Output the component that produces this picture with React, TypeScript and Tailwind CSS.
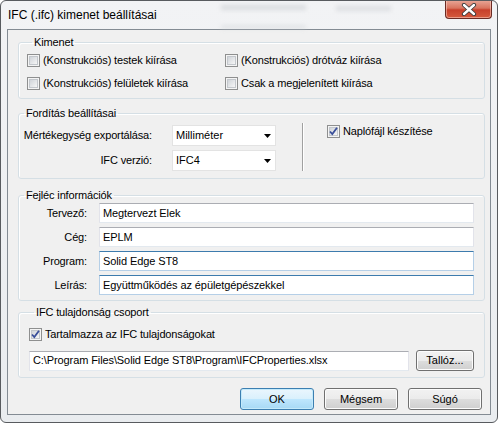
import React from 'react';

const font = "font-['Liberation_Sans',Arial,sans-serif]";

const CheckBox: React.FC<{ checked?: boolean; label: string; tall?: boolean }> = ({ checked, label, tall }) => (
    <div className={`flex items-center ${tall ? 'h-[23px]' : 'h-[22px]'}`}>
        <div className="w-[13px] h-[13px] border border-[#8e8f8f] bg-[#f4f4f4] p-[1px] shrink-0">
            <div className="relative w-full h-full border border-[#c3c7cc] bg-gradient-to-br from-[#d0d4d9] to-[#f6f6f6]">
                {checked && (
                    <svg className="absolute -left-[2px] -top-[2px]" width="11" height="11" viewBox="0 0 11 11">
                        <path d="M2 5.5 L4.3 8 L9 1.8" fill="none" stroke="#3a4f9a" strokeWidth="1.8" />
                    </svg>
                )}
            </div>
        </div>
        <span className="ml-[3px] text-[11px] tracking-[-0.15px] text-black whitespace-nowrap">{label}</span>
    </div>
);

const GroupBox: React.FC<{ title: string; className?: string; children: React.ReactNode }> = ({ title, className, children }) => (
    <fieldset className={`min-w-0 border border-[#d5dfe5] rounded-[3px] shadow-[inset_1px_1px_0_#ffffff] ${className ?? ''}`}>
        <legend className="ml-[5px] px-[2px] text-[11px] leading-[13px] tracking-[-0.15px] text-black">{title}</legend>
        {children}
    </fieldset>
);

const Combo: React.FC<{ value: string }> = ({ value }) => (
    <div className="w-[104px] h-[21px] bg-white border border-[#e3e3e3] flex items-center pl-[3px] pr-[4px]">
        <span className="flex-1 text-[11px]">{value}</span>
        <svg width="7" height="4" viewBox="0 0 7 4">
            <path d="M0 0 H7 L3.5 4 Z" fill="#000" />
        </svg>
    </div>
);

const TextBox: React.FC<{ value: string; hot?: boolean; className?: string }> = ({ value, hot, className }) => (
    <div
        className={`h-[20px] bg-white flex items-center px-[3px] text-[11px] tracking-[-0.1px] whitespace-nowrap overflow-hidden border ${
            hot
                ? 'border-[#b5cfe7] border-t-[#3d7bad]'
                : 'border-[#e2e3ea] border-t-[#abadb3] border-b-[#e3e9ef]'
        } ${className ?? ''}`}
    >
        {value}
    </div>
);

const Button: React.FC<{ label: string; primary?: boolean; small?: boolean }> = ({ label, primary, small }) => (
    <div
        className={`${small ? 'w-[58px] h-[21px]' : 'w-[74px] h-[22px]'} rounded-[3px] border flex items-center justify-center text-[11px] ${
            primary
                ? 'border-[#3c7fb1] bg-[linear-gradient(#eaf6fd_0%,#d9f0fc_50%,#bee6fd_51%,#a7d9f5_100%)] shadow-[inset_0_0_0_1px_#c4eafb]'
                : 'border-[#707070] bg-[linear-gradient(#f2f2f2_0%,#ebebeb_50%,#dddddd_51%,#cfcfcf_100%)] shadow-[inset_0_0_0_1px_#fcfcfc]'
        }`}
    >
        {label}
    </div>
);

export default function App() {
    return (
        <div className={`w-[498px] h-[423px] ${font} text-black`}>
            <div className="w-full h-full border border-[#585b5f] rounded-[6px] bg-[linear-gradient(#f2f3f5,#e9ecef)] flex flex-col overflow-hidden">
                {/* Title bar */}
                <div className="relative h-[28px] flex items-start">
                    {/* blurred glass smudges from windows behind */}
                    <div className="absolute left-[220px] top-[4px] w-[85px] h-[5px] bg-[#c3c7cb] blur-[2px] opacity-50" />
                    <div className="absolute left-[335px] top-[5px] w-[55px] h-[5px] bg-[#c9cdd1] blur-[2px] opacity-50" />
                    <div className="absolute left-[220px] top-[24px] w-[85px] h-[4px] bg-[#c9cdd1] blur-[2px] opacity-40" />
                    <span className="relative ml-[7px] mt-[6px] text-[12px] leading-[16px]">IFC (.ifc) kimenet beállításai</span>
                    <div className="relative ml-auto mr-[5px] w-[47px] h-[19px] -mt-[1px] rounded-b-[4px] border border-[#6a2b24] border-t-0 bg-[linear-gradient(#e9a99a_0%,#d8745f_45%,#c7402b_55%,#d55a3d_100%)] shadow-[inset_0_0_0_1px_rgba(255,220,210,0.5)] flex items-center justify-center">
                        <svg width="16" height="13" viewBox="0 0 16 13">
                            <path d="M3 2 L13 11 M13 2 L3 11" stroke="#3a3a3a" strokeWidth="4.2" strokeLinecap="round" />
                            <path d="M3 2 L13 11 M13 2 L3 11" stroke="#ffffff" strokeWidth="2.4" strokeLinecap="round" />
                        </svg>
                    </div>
                </div>

                {/* Client area */}
                <div className="ml-[6px] w-[484px] h-[386px] border border-[#838b93] bg-[#f0f0f0] flex flex-col pl-[10px] pr-[5px]">
                    <GroupBox title="Kimenet" className="mt-[6px] pl-[8px] pb-[3px]">
                        <div className="flex">
                            <div className="w-[198px]">
                                <CheckBox tall label="(Konstrukciós) testek kiírása" />
                                <CheckBox tall label="(Konstrukciós) felületek kiírása" />
                            </div>
                            <div>
                                <CheckBox tall label="(Konstrukciós) drótváz kiírása" />
                                <CheckBox tall label="Csak a megjelenített kiírása" />
                            </div>
                        </div>
                    </GroupBox>

                    <GroupBox title="Fordítás beállításai" className="mt-[8px] pt-[5px] pb-[7px]">
                        <div className="flex">
                            <div className="flex flex-col gap-[4px]">
                                <div className="flex items-center h-[21px]">
                                    <span className="w-[133px] text-right text-[11px] tracking-[-0.15px] whitespace-nowrap">Mértékegység exportálása:</span>
                                    <div className="ml-[20px]"><Combo value="Milliméter" /></div>
                                </div>
                                <div className="flex items-center h-[21px]">
                                    <span className="w-[133px] text-right text-[11px] tracking-[-0.15px] whitespace-nowrap">IFC verzió:</span>
                                    <div className="ml-[20px]"><Combo value="IFC4" /></div>
                                </div>
                            </div>
                            <div className="ml-[26px] mt-[-2px] w-[2px] h-[48px] border-l border-[#a0a0a0] border-r border-r-white" />
                            <div className="ml-[23px] mt-[-5px]">
                                <CheckBox checked label="Naplófájl készítése" />
                            </div>
                        </div>
                    </GroupBox>

                    <GroupBox title="Fejléc információk" className="mt-[10px] pb-[5px]">
                        <div className="flex flex-col gap-[4px] mt-[1px]">
                            {[
                                ['Tervező:', 'Megtervezt Elek', false],
                                ['Cég:', 'EPLM', false],
                                ['Program:', 'Solid Edge ST8', true],
                                ['Leírás:', 'Együttműködés az épületgépészekkel', true],
                            ].map(([label, value, hot]) => (
                                <div key={label as string} className="flex items-center">
                                    <span className="w-[68px] text-right text-[11px] tracking-[-0.15px]">{label as string}</span>
                                    <TextBox value={value as string} hot={hot as boolean} className="ml-[12px] w-[375px]" />
                                </div>
                            ))}
                        </div>
                    </GroupBox>

                    <GroupBox title="IFC tulajdonság csoport" className="mt-[5px] pl-[10px] pb-[6px]">
                        <div className="mt-[4px]">
                            <CheckBox checked label="Tartalmazza az IFC tulajdonságokat" />
                        </div>
                        <div className="flex items-center mt-[5px]">
                            <TextBox value="C:\Program Files\Solid Edge ST8\Program\IFCProperties.xlsx" className="w-[380px]" />
                            <div className="ml-[7px]"><Button label="Tallóz..." small /></div>
                        </div>
                    </GroupBox>

                    <div className="flex justify-end gap-[10px] mt-[10px] mr-[3px]">
                        <Button label="OK" primary />
                        <Button label="Mégsem" />
                        <Button label="Súgó" />
                    </div>
                </div>
            </div>
        </div>
    );
}
